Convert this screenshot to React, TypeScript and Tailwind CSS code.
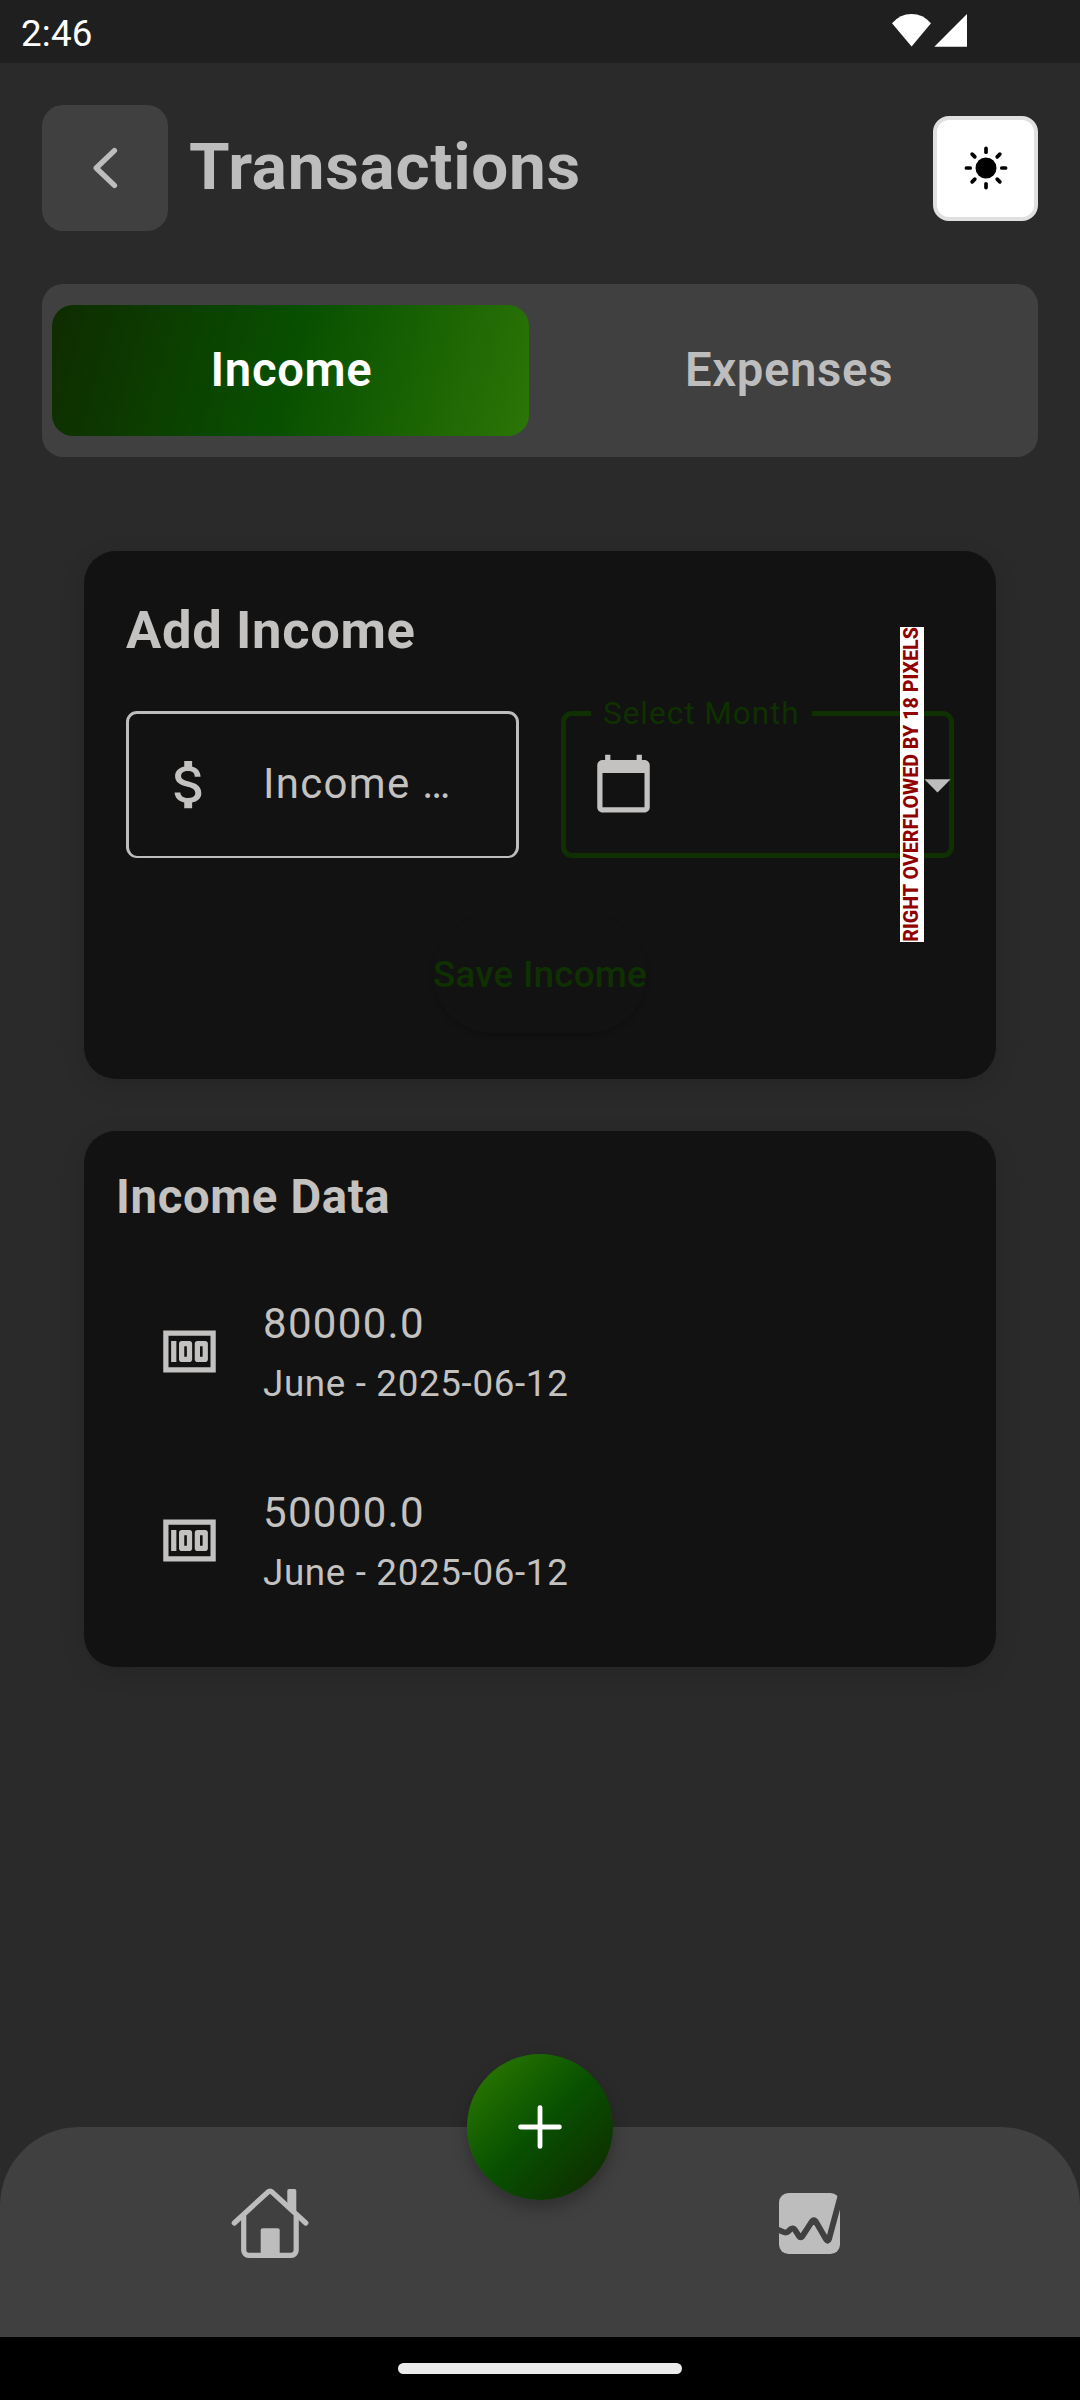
import React from 'react';
import { MdArrowDropDown, MdAttachMoney, MdCalendarToday, MdMoney } from 'react-icons/md';

const incomes = [
  { amount: '80000.0', detail: 'June - 2025-06-12' },
  { amount: '50000.0', detail: 'June - 2025-06-12' },
];

function StatusBar() {
  return (
    <div className="flex h-[63px] items-start justify-between bg-[#1f1f1f] pl-[21px] pr-[113px] text-white">
      <span className="mt-[12px] text-[36.75px] leading-[43px] tracking-[0.2px]">2:46</span>
      <svg className="mt-[14px]" width="75" height="33" viewBox="0 0 75 33" fill="currentColor">
        <path d="M0 9.3Q8 0 19.5 0T39 9.3L19.6 32.6Z" />
        <path d="M42.3 32.7L75 0V32.7Z" />
      </svg>
    </div>
  );
}

function SunIcon() {
  return (
    <svg width="46" height="46" viewBox="-23 -23 46 46">
      <circle r="10.5" fill="#000" />
      <g stroke="#000" strokeWidth="3.7" strokeLinecap="round">
        {[0, 45, 90, 135, 180, 225, 270, 315].map((a) => (
          <path key={a} d="M0 -15.8V-19.6" transform={`rotate(${a})`} />
        ))}
      </g>
    </svg>
  );
}

function Header() {
  return (
    <header className="mx-[42px] mt-[42px] flex h-[126px] items-center">
      <button className="flex size-[126px] items-center justify-center rounded-[21px] bg-[#404040]">
        <svg width="26" height="42" viewBox="0 0 26 42" fill="none" stroke="#bdbdbd" strokeWidth="5.4" strokeLinecap="round" strokeLinejoin="round">
          <path d="M22.4 3.6L4.2 21L22.4 38.4" />
        </svg>
      </button>
      <h1 className="mb-[2px] ml-[21px] text-[65.6px] font-bold leading-[76px] tracking-[0.72px]">Transactions</h1>
      <button className="ml-auto flex size-[105px] items-center justify-center rounded-[16px] border-[4px] border-[#e0e0e0] bg-white">
        <SunIcon />
      </button>
    </header>
  );
}

function Tabs() {
  return (
    <div className="mx-[42px] mt-[53px] flex h-[173px] rounded-[21px] bg-[#404040] px-[10px] py-[21px] text-[47.25px] font-semibold leading-[55px] tracking-[0.66px]">
      <button className="flex w-[477px] items-center justify-center rounded-[21px] bg-[linear-gradient(105.4deg,#0f2c00_0%,#085000_50%,#2c7506_100%)] pl-[2px] text-white">
        Income
      </button>
      <button className="flex flex-1 items-center justify-center pl-[21px]">Expenses</button>
    </div>
  );
}

function AddIncomeCard() {
  return (
    <section className="relative mx-[84px] mt-[94px] h-[528px] rounded-[32px] bg-[#121212] px-[42px] pt-[49px] text-[#c3c2c1] shadow-[0_6px_24px_rgba(0,0,0,0.12)]">
      <h2 className="text-[52.5px] font-bold leading-[61px] tracking-[0.66px]">Add Income</h2>
      <div className="mt-[50px] flex gap-[42px]">
        <div className="flex h-[147px] w-[393px] items-center rounded-[11px] border-[3px] border-b-2 border-[#bdbdbd] pl-[28.5px]">
          <MdAttachMoney size={63} className="mb-px" />
          <span className="mb-[3px] ml-[42.5px] text-[42px] leading-[49px] tracking-[1.31px]">Income …</span>
        </div>
        <div className="relative flex h-[147px] w-[393px] items-center rounded-[11px] border-[5px] border-[#0f3000] pl-[26px]">
          <MdCalendarToday size={63} className="mb-[2px]" />
          <span className="absolute left-[25px] top-[-21px] bg-[#121212] px-[12px] text-[31.5px] leading-[37px] tracking-[0.98px] text-[#0f3000]">
            Select Month
          </span>
          <MdArrowDropDown size={63} className="absolute right-[-20px] top-[37px] text-[#bdbdbd]" />
        </div>
      </div>
      <div className="absolute left-[816px] top-[76px] flex h-[315px] w-[24px] items-center justify-center bg-white">
        <span className="rotate-180 whitespace-nowrap text-[19.7px] font-extrabold leading-[24px] text-[#900000] [writing-mode:vertical-rl]">
          RIGHT OVERFLOWED BY 18 PIXELS
        </span>
      </div>
      <button className="mx-auto mt-[57px] flex h-[118px] w-[214px] items-center justify-center whitespace-nowrap rounded-[59px] bg-[#121212] text-[36.75px] font-medium leading-[43px] tracking-[0.26px] text-[#0f3000] shadow-[0_3px_5px_rgba(0,0,0,0.16)]">
        Save Income
      </button>
    </section>
  );
}

function IncomeDataCard() {
  return (
    <section className="mx-[84px] mt-[52px] h-[536px] rounded-[32px] bg-[#121212] pt-[39px] text-[#c3c2c1] shadow-[0_6px_24px_rgba(0,0,0,0.12)]">
      <h2 className="ml-[32px] text-[47.25px] font-bold leading-[55px] tracking-[0.66px]">Income Data</h2>
      <ul className="mt-[32px]">
        {incomes.map((row) => (
          <li key={row.amount} className="flex h-[189px] items-center pl-[73.5px]">
            <MdMoney size={63} />
            <div className="ml-[42.5px]">
              <p className="-mt-px mb-px text-[42px] leading-[63px] tracking-[1.31px]">{row.amount}</p>
              <p className="text-[36.75px] leading-[55px] tracking-[0.66px]">{row.detail}</p>
            </div>
          </li>
        ))}
      </ul>
    </section>
  );
}

function BottomNav() {
  return (
    <nav className="relative h-[210px] rounded-t-[79px] bg-[#404040] text-[#bdbdbd]">
      <div className="flex justify-between pl-[228px] pr-[240px] pt-[59px]">
        <svg width="84" height="74" viewBox="0 0 84 74" fill="none" stroke="currentColor" strokeWidth="5.2" strokeLinecap="round" strokeLinejoin="round">
          <path d="M6.3 37L39.6 6.3Q42 4.3 44.4 6.3L77.8 37" />
          <path d="M15.7 29.5V64.3a5 5 0 0 0 5 5H63.2a5 5 0 0 0 5-5V29.5" strokeLinecap="butt" />
          <path d="M59.3 4.7a1.7 1.7 0 0 1 1.7-1.7h5.6a1.7 1.7 0 0 1 1.7 1.7V28.5L59.3 20Z" fill="currentColor" stroke="none" />
          <path d="M32.7 69V44.3a2 2 0 0 1 2-2h15a2 2 0 0 1 2 2V69Z" fill="currentColor" stroke="none" />
        </svg>
        <svg className="mt-[7px]" width="61" height="61" viewBox="0 0 61 61">
          <rect width="61" height="61" rx="9.5" fill="currentColor" />
          <path
            d="M-3 35.8L3.5 38.6Q7.5 40.5 9.8 38L11.4 36.3Q13.9 34.2 16 37L20 43.2Q21.7 45.6 23.4 43.2L33 28.3Q34.8 26 36.6 28.3L47.2 46.6Q49 49 50 46L64 -6"
            fill="none"
            stroke="#404040"
            strokeWidth="5.9"
            strokeLinecap="round"
            strokeLinejoin="round"
          />
        </svg>
      </div>
      <button className="absolute left-[467px] top-[-73px] flex size-[146px] items-center justify-center rounded-full bg-[linear-gradient(135deg,#307f00_0%,#085000_50%,#102600_100%)] shadow-[0_8px_16px_rgba(0,0,0,0.28)]">
        <svg width="48" height="48" viewBox="0 0 48 48" stroke="#fff" strokeWidth="4.8" strokeLinecap="round">
          <path d="M24 4.6V43.4M4.6 24H43.4" />
        </svg>
      </button>
    </nav>
  );
}

export default function App() {
  return (
    <div className="flex h-[2400px] w-[1080px] flex-col overflow-hidden bg-[#2a2a2a] font-['Roboto',sans-serif] text-[#bdbdbd]">
      <StatusBar />
      <Header />
      <Tabs />
      <AddIncomeCard />
      <IncomeDataCard />
      <div className="mt-auto">
        <BottomNav />
        <div className="flex h-[63px] justify-center bg-black pt-[26px]">
          <div className="h-[11px] w-[284px] rounded-full bg-[#ebebeb]" />
        </div>
      </div>
    </div>
  );
}
